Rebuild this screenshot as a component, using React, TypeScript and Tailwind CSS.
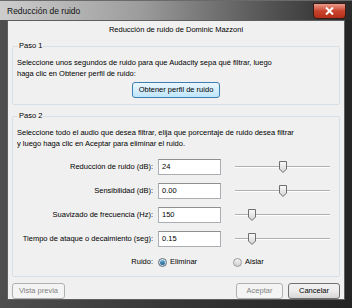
export default function App() {
  return (
    <div className="w-[352px] h-[308px] flex flex-col bg-gradient-to-r from-[#4e4e4e] via-[#363636] to-[#242424] font-['Liberation_Sans',Arial,sans-serif] text-[7.5px] text-black overflow-hidden">
      {/* title bar */}
      <div className="h-[22px] flex items-start bg-gradient-to-r from-[#cdcdcd] via-[#9c9c9c] via-40% to-[#2a2a2a] border-t border-[#6a6a6a]">
        <div className="pl-[7px] pt-[5px] text-[8.5px] leading-[10px] text-[#111]">Reducción de ruido</div>
        <div className="ml-auto mr-[6px] mt-[2px] w-[33px] h-[16px] rounded-b-[4px] border border-[#3a1a14] bg-gradient-to-b from-[#e99a8a] via-[#c9422c] to-[#b5301b] flex items-center justify-center">
          <svg width="9" height="8" viewBox="0 0 9 8">
            <path d="M1 0.5 L8 7.5 M8 0.5 L1 7.5" stroke="#ffffff" strokeWidth="2" />
          </svg>
        </div>
      </div>

      {/* client */}
      <div className="flex-1 mx-[7px] mb-[8px] border border-[#5e5e5e] bg-[#f0f0f0] flex flex-col px-[4px]">
        <div className="h-[18px] pt-[4px] leading-[10px] text-center">Reducción de ruido de Dominic Mazzoni</div>

        <fieldset className="border border-[#d5dfe5] rounded-[2px] px-[4px] pb-[6px] mt-[2px]">
          <legend className="px-[1px] leading-[10px] ml-[1px]">Paso 1</legend>
          <div className="pt-[6px] leading-[11px]">
            Seleccione unos segundos de ruido para que Audacity sepa qué filtrar, luego
            <br />
            haga clic en Obtener perfil de ruido:
          </div>
          <div className="flex justify-center mt-[3px]">
            <button className="h-[16px] px-[6px] rounded-[3px] border border-[#3c7fb1] bg-gradient-to-b from-[#eaf6fd] to-[#bee6fd] leading-[14px] text-black">
              Obtener perfil de ruido
            </button>
          </div>
        </fieldset>

        <fieldset className="border border-[#d5dfe5] rounded-[2px] px-[4px] pb-[3px] mt-[6px]">
          <legend className="px-[1px] leading-[10px] ml-[1px]">Paso 2</legend>
          <div className="pt-[6px] leading-[11px]">
            Seleccione todo el audio que desea filtrar, elija que porcentaje de ruido desea filtrar
            <br />
            y luego haga clic en Aceptar para eliminar el ruido.
          </div>
          <div className="flex flex-col mt-[6px]">
            <Row label="Reducción de ruido (dB):" value="24" pos={50} />
            <Row label="Sensibilidad (dB):" value="0.00" pos={50} />
            <Row label="Suavizado de frecuencia (Hz):" value="150" pos={18} />
            <Row label="Tiempo de ataque o decaimiento (seg):" value="0.15" pos={18} />
            <div className="h-[22px] flex items-center">
              <div className="w-[141px] text-right pr-[5px]">Ruido:</div>
              <div className="flex items-center gap-[3px] w-[75px]">
                <div className="w-[9px] h-[9px] rounded-full border border-[#5a6f80] bg-gradient-to-b from-[#e8eef3] to-[#c8d4dc] flex items-center justify-center">
                  <div className="w-[5px] h-[5px] rounded-full bg-gradient-to-b from-[#6fb4dc] to-[#1d5b8a]" />
                </div>
                <span>Eliminar</span>
              </div>
              <div className="flex items-center gap-[3px]">
                <div className="w-[9px] h-[9px] rounded-full border border-[#9a9a9a] bg-gradient-to-b from-[#f4f4f4] to-[#cfcfcf]" />
                <span>Aislar</span>
              </div>
            </div>
          </div>
        </fieldset>

        <div className="flex items-center mt-[6px]">
          <button className="h-[16px] w-[53px] rounded-[3px] border border-[#adb2b5] bg-[#f4f4f4] text-[#838383] leading-[14px]">
            Vista previa
          </button>
          <button className="ml-auto h-[16px] w-[47px] rounded-[3px] border border-[#adb2b5] bg-[#f4f4f4] text-[#838383] leading-[14px]">
            Aceptar
          </button>
          <button className="ml-[5px] h-[16px] w-[52px] rounded-[3px] border border-[#707070] bg-gradient-to-b from-[#f2f2f2] via-[#ebebeb] to-[#d6d6d6] leading-[14px] text-black">
            Cancelar
          </button>
        </div>
      </div>
    </div>
  );
}

function Row({ label, value, pos }: { label: string; value: string; pos: number }) {
  return (
    <div className="h-[24px] flex items-center">
      <div className="w-[141px] text-right pr-[5px]">{label}</div>
      <div className="w-[63px] h-[16px] border border-[#abadb3] border-t-[#8e8f8f] bg-white pl-[3px] leading-[14px]">{value}</div>
      <div className="ml-[14px] w-[95px] h-[16px] relative">
        <div className="absolute left-0 right-0 top-[7px] h-[2px] border-t border-[#b0b0b0] border-b border-b-[#ffffff]" />
        <div
          className="absolute top-[2px] w-[8px] h-[12px]"
          style={{ left: `calc(${pos}% - 4px)` }}
        >
          <svg width="8" height="12" viewBox="0 0 8 12">
            <defs>
              <linearGradient id="tg" x1="0" y1="0" x2="0" y2="1">
                <stop offset="0" stopColor="#fafafa" />
                <stop offset="1" stopColor="#d4d4d4" />
              </linearGradient>
            </defs>
            <path d="M0.5 0.5 H7.5 V8 L4 11.5 L0.5 8 Z" fill="url(#tg)" stroke="#6f6f6f" />
          </svg>
        </div>
      </div>
    </div>
  );
}
